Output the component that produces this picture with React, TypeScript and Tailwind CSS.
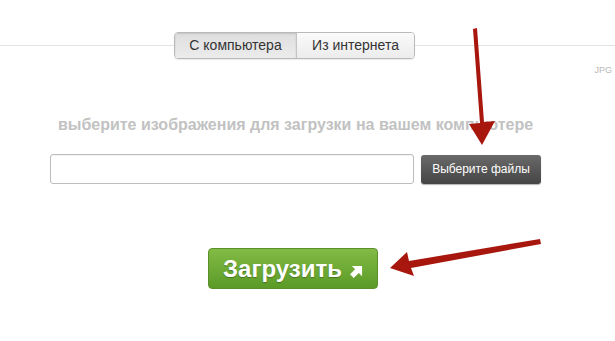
import React from 'react';

export default function App() {
  return (
    <div
      className="relative w-[615px] h-[341px] bg-white overflow-hidden"
      style={{ fontFamily: '"Liberation Sans", Arial, sans-serif' }}
    >
      <div className="flex items-center pt-[32px]">
        <div className="w-[174px] h-px bg-[#e3e3e3]" />
        <div className="flex h-[27px] rounded-[4px] border border-[#b9b9b9] overflow-hidden text-[14px] text-[#333] shadow-[0_1px_1px_rgba(0,0,0,0.08)]">
          <button className="w-[122px] bg-gradient-to-b from-[#dedede] to-[#ececec] border-r border-[#c4c4c4] shadow-[inset_0_1px_2px_rgba(0,0,0,0.12)]">
            С компьютера
          </button>
          <button className="w-[117px] bg-gradient-to-b from-[#fafafa] to-[#ececec]">
            Из интернета
          </button>
        </div>
        <div className="flex-1 h-px bg-[#e3e3e3]" />
      </div>

      <div className="flex justify-end pr-[3px] pt-[7px] text-[9px] text-[#b8b8b8] leading-none">
        JPG
      </div>

      <h2 className="mt-[42px] text-center text-[16px] font-bold text-[#c2c2c2] leading-none pr-[24px]">
        выберите изображения для загрузки на вашем компьютере
      </h2>

      <div className="flex items-center gap-[7px] pl-[50px] mt-[21px]">
        <div className="w-[364px] h-[30px] rounded-[3px] border border-[#bdbdbd] bg-white shadow-[inset_0_1px_1px_rgba(0,0,0,0.05)]" />
        <button className="w-[120px] h-[29px] rounded-[3px] bg-gradient-to-b from-[#6a6a6a] to-[#454545] text-white text-[12px] shadow-[0_1px_1px_rgba(0,0,0,0.3)]">
          Выберите файлы
        </button>
      </div>

      <div className="flex pl-[208px] mt-[64px]">
        <button className="flex items-center justify-center gap-[8px] w-[170px] h-[41px] rounded-[4px] bg-gradient-to-b from-[#82bb45] to-[#5b9a27] border border-[#5a8f2a] text-white text-[24px] font-bold [text-shadow:0_1px_1px_rgba(0,0,0,0.3)]">
          Загрузить
          <svg width="13" height="13" viewBox="0 0 14 14" className="mt-[5px]">
            <path d="M2 1h11v11l-3.5-3.5L4 14 0 10l5.5-5.5z" fill="white" />
          </svg>
        </button>
      </div>

      <svg className="absolute inset-0 pointer-events-none" width="615" height="341" viewBox="0 0 615 341">
        <path d="M473 29 L477 28 L484 122 L495 121 L482 145 L469 124 L480 123 Z" fill="#a8170d" />
        <path d="M540 239 L541 244 L411 268 L414 276 L390 268 L407 252 L409 261 Z" fill="#a8170d" />
      </svg>
    </div>
  );
}
